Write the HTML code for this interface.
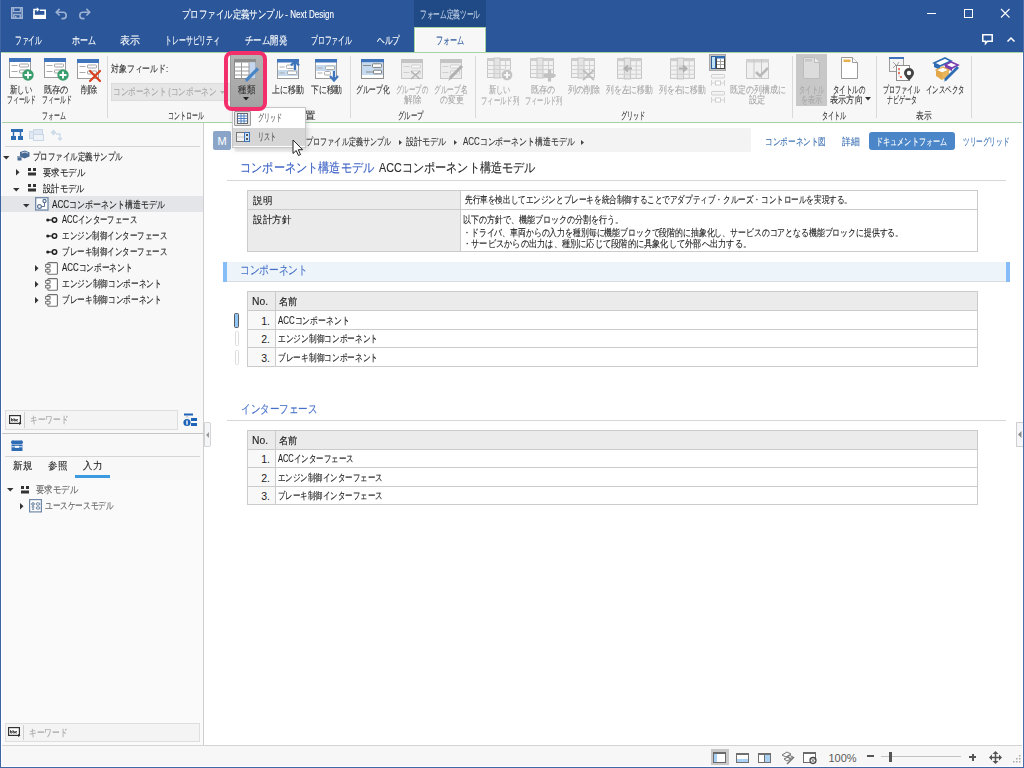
<!DOCTYPE html>
<html><head><meta charset="utf-8">
<style>
*{box-sizing:border-box;margin:0;padding:0}
html,body{width:1024px;height:768px;overflow:hidden;background:#f7f7f7;font-family:"Liberation Sans",sans-serif}
.a{position:absolute}
.t{position:absolute;white-space:nowrap;display:inline-block;transform-origin:0 50%;-webkit-text-stroke:0.12px currentColor;line-height:12px;height:12px;font-size:11px;color:#3c3c3c}
.tb{color:#fff;font-size:10.5px}
.rb{font-size:9.8px;line-height:10px;height:10px;color:#333}
.dis{color:#a8a8a8}
.gl{font-size:10.5px;line-height:10px;height:10px;color:#404040}
.sep{position:absolute;width:1px;background:#dadada}
.tr{font-size:10.2px;color:#1e1e1e}
.ct{font-size:10px;color:#1e1e1e;margin-top:0.7px}
svg{position:absolute;overflow:visible}
</style>
</head><body>
<!-- window frame -->
<div class="a" style="left:0;top:0;width:1024px;height:52px;background:#2b579a"></div>
<div class="a" style="left:414px;top:0;width:72px;height:27px;background:#1f4a85"></div>
<div class="a" style="left:414px;top:27px;width:72px;height:25px;background:#f7f7f7;border:1px solid #a6d3a6;border-bottom:none;box-shadow:inset 1px 1px 0 #fff,inset -1px 0 0 #fff"></div>
<div class="a" style="left:0;top:52px;width:1024px;height:1px;background:#a6d3a6"></div>
<!-- ribbon -->
<div class="a" style="left:1px;top:53px;width:1022px;height:69px;background:#f7f7f7"></div>
<div class="a" style="left:0;top:122px;width:1024px;height:1px;background:#a6d3a6"></div>
<!-- left panel -->
<div class="a" style="left:1px;top:123px;width:202px;height:622px;background:#f8f8f8"></div>
<div class="a" style="left:203px;top:123px;width:1px;height:622px;background:#cfcfcf"></div>
<!-- main -->
<div class="a" style="left:204px;top:123px;width:819px;height:622px;background:#fff"></div>
<!-- status bar -->
<div class="a" style="left:0;top:745px;width:1024px;height:1px;background:#d4d4d4"></div>
<div class="a" style="left:1px;top:746px;width:1022px;height:21px;background:#f7f7f7"></div>
<!-- borders -->
<div class="a" style="left:1px;top:53px;width:1px;height:714px;background:#fff"></div>
<div class="a" style="left:1022px;top:53px;width:1px;height:714px;background:#fff"></div>
<div class="a" style="left:1px;top:766px;width:1022px;height:1px;background:#fff"></div>
<div class="a" style="left:0;top:0;width:1px;height:768px;background:#3d64a3"></div>
<div class="a" style="left:1023px;top:0;width:1px;height:768px;background:#4a70ab"></div>
<div class="a" style="left:0;top:767px;width:1024px;height:1px;background:#4068a6"></div>


<!-- QAT icons -->
<svg style="left:11px;top:7px" width="12" height="12"><path d="M0.8 0.8h10.4v10.4H0.8z" fill="none" stroke="#9db1d3" stroke-width="1.6"></path><path d="M2.5 1v3.6h7V1" fill="none" stroke="#9db1d3" stroke-width="1.4"></path><path d="M2.8 11V7.5h6.4V11" fill="none" stroke="#9db1d3" stroke-width="1.4"></path><rect x="4" y="9" width="1.5" height="2" fill="#9db1d3"></rect></svg>
<svg style="left:33px;top:6px" width="13" height="13"><path d="M1 12.2V5.5M1 12.2h11.2V4.2H6.8" fill="none" stroke="#fff" stroke-width="1.6"></path><path d="M0.2 8.8h11.8v4.2H0.2z" fill="#fff"></path><path d="M1 6.8V3.6h3.5" fill="none" stroke="#fff" stroke-width="1.5"></path><path d="M3.8 1.2l2.6 2.4-2.6 2.4z" fill="#fff"></path></svg>
<svg style="left:55px;top:8px" width="13" height="11"><path d="M4.6 0.9L1.3 4.2l3.3 3.3" fill="none" stroke="#9db1d3" stroke-width="1.6"></path><path d="M1.5 4.2H8a3.2 3.2 0 0 1 0 6.4H6.5" fill="none" stroke="#9db1d3" stroke-width="1.6"></path></svg>
<svg style="left:78px;top:8px" width="13" height="11"><path d="M8.4 0.9l3.3 3.3-3.3 3.3" fill="none" stroke="#9db1d3" stroke-width="1.6"></path><path d="M11.5 4.2H5a3.2 3.2 0 0 0 0 6.4h1.5" fill="none" stroke="#9db1d3" stroke-width="1.6"></path></svg>
<!-- window controls -->
<div class="a" style="left:927px;top:13px;width:8.5px;height:1px;background:#fff"></div>
<div class="a" style="left:964px;top:9px;width:8.5px;height:8.5px;border:1px solid #fff"></div>
<svg style="left:1000.5px;top:9px" width="9" height="9"><path d="M0 0L8.5 8.5M8.5 0L0 8.5" stroke="#fff" stroke-width="1.1"></path></svg>
<svg style="left:982px;top:34px" width="11" height="11"><path d="M0.8 0.8h9.4v6.5H5.5l-2 2.2V7.3H0.8z" fill="none" stroke="#fff" stroke-width="1.5"></path></svg>
<svg style="left:1007px;top:37px" width="8" height="5"><path d="M0.5 4.5L4 1l3.5 3.5" fill="none" stroke="#fff" stroke-width="1.5"></path></svg>


<!-- ribbon content -->

<!-- form group -->
<svg style="left:9px;top:58px" width="22" height="20"><svg viewBox="0 0 22 20"><rect x="0.5" y="0.5" width="21" height="19" fill="#fff" stroke="#9c9c9c"></rect><rect x="0" y="0" width="22" height="4" fill="#3d74bb"></rect><path d="M2.5 7.5h6M2.5 13.5h6" stroke="#aaa"></path><rect x="10.5" y="6" width="9" height="3" rx="0.6" fill="none" stroke="#a5a5a5"></rect><rect x="10.5" y="12" width="9" height="3" rx="0.6" fill="none" stroke="#a5a5a5"></rect></svg></svg>
<svg style="left:22px;top:69px" width="12" height="12"><svg viewBox="0 0 12 12"><circle cx="6" cy="6" r="5.7" fill="#3a9e6c"></circle><path d="M6 2.5v7M2.5 6h7" stroke="#fff" stroke-width="1.8"></path></svg></svg>
<svg style="left:44px;top:58px" width="22" height="20"><svg viewBox="0 0 22 20"><rect x="0.5" y="0.5" width="21" height="19" fill="#fff" stroke="#9c9c9c"></rect><rect x="0" y="0" width="22" height="4" fill="#3d74bb"></rect><path d="M2.5 7.5h6M2.5 13.5h6" stroke="#aaa"></path><rect x="10.5" y="6" width="9" height="3" rx="0.6" fill="none" stroke="#a5a5a5"></rect><rect x="10.5" y="12" width="9" height="3" rx="0.6" fill="none" stroke="#a5a5a5"></rect></svg></svg>
<svg style="left:57px;top:69px" width="12" height="12"><svg viewBox="0 0 12 12"><circle cx="6" cy="6" r="5.7" fill="#3a9e6c"></circle><path d="M6 2.5v7M2.5 6h7" stroke="#fff" stroke-width="1.8"></path></svg></svg>
<svg style="left:77px;top:59px" width="22" height="20"><svg viewBox="0 0 22 20"><rect x="0.5" y="0.5" width="21" height="19" fill="#fff" stroke="#9c9c9c"></rect><rect x="0" y="0" width="22" height="4" fill="#3d74bb"></rect><path d="M2.5 7.5h6M2.5 13.5h6" stroke="#aaa"></path><rect x="10.5" y="6" width="9" height="3" rx="0.6" fill="none" stroke="#a5a5a5"></rect><rect x="10.5" y="12" width="9" height="3" rx="0.6" fill="none" stroke="#a5a5a5"></rect></svg></svg>
<svg style="left:89px;top:70px" width="12" height="12"><path d="M1 1l10 10M11 1L1 11" stroke="#d9401f" stroke-width="2.2" stroke-linecap="round"></path></svg>
<div class="sep" style="left:107px;top:56px;height:62px"></div>
<!-- control group -->
<div class="a" style="left:111px;top:83px;width:130px;height:18px;background:#e6e6e6;border:1px solid #dcdcdc"></div>
<svg style="left:220px;top:91px" width="5" height="3"><path d="M0 0h5L2.5 3z" fill="#b0b0b0"></path></svg>
<div class="sep" style="left:350px;top:56px;height:62px"></div>
<!-- kind button -->
<div class="a" style="left:230px;top:54px;width:33px;height:54px;background:linear-gradient(#b4b4b4,#a3a3a3);border-left:1px solid #9a9a9a"></div>
<svg style="left:234px;top:59px" width="26" height="24"><rect x="0.5" y="0.5" width="21" height="19" fill="#fff" stroke="#8a8a8a"></rect><rect x="0" y="0" width="22" height="3.5" fill="#8e8e8e"></rect><rect x="15" y="3.5" width="6.5" height="16" fill="#c4d7ee"></rect><path d="M0 8h15M0 12h15M0 16h15M7.5 3.5v16M15 3.5v16" stroke="#9a9a9a"></path><path d="M24 9.5L12 21.5" stroke="#4a86c6" stroke-width="3.2"></path><path d="M12.5 20.5l-1.5 2.5 2.5-1.5z" fill="#4a86c6"></path></svg>
<svg style="left:243px;top:97px" width="6" height="4"><path d="M0 0h6L3 3.5z" fill="#222"></path></svg>
<!-- move up/down -->
<svg style="left:277px;top:59px" width="24" height="20"><rect x="0.5" y="0.5" width="21" height="19" fill="#fff" stroke="#999"></rect><rect x="0" y="0" width="22" height="3.5" fill="#3d74bb"></rect><rect x="1" y="11" width="20" height="6" fill="#c6daef"></rect><path d="M2.5 8h5M2.5 14h5" stroke="#aaa"></path><rect x="9.5" y="6" width="8" height="3.5" rx="1" fill="#fff" stroke="#aaa"></rect><rect x="10.5" y="12" width="9" height="3.5" rx="1" fill="#fff" stroke="#aaa"></rect><path d="M18 11V3.5" stroke="#3d74bb" stroke-width="2.4"></path><path d="M14 6.5l4-4.5 4 4.5" fill="none" stroke="#3d74bb" stroke-width="2.2"></path></svg>
<svg style="left:315px;top:59px" width="24" height="23"><rect x="0.5" y="0.5" width="21" height="19" fill="#fff" stroke="#999"></rect><rect x="0" y="0" width="22" height="3.5" fill="#3d74bb"></rect><rect x="1" y="6" width="20" height="6" fill="#c6daef"></rect><path d="M2.5 9h5M2.5 14h5" stroke="#aaa"></path><rect x="10.5" y="7" width="9" height="3.5" rx="1" fill="#fff" stroke="#aaa"></rect><rect x="9.5" y="12.5" width="6" height="3.5" rx="1" fill="#fff" stroke="#aaa"></rect><path d="M19 12v8.5" stroke="#3d74bb" stroke-width="2.4"></path><path d="M15 17l4 4.5 4-4.5" fill="none" stroke="#3d74bb" stroke-width="2.2"></path></svg>
<!-- group group -->
<svg style="left:361px;top:59px" width="23" height="20"><rect x="0.5" y="0.5" width="22" height="19" fill="#fff" stroke="#8c8c8c"></rect><rect x="0" y="0" width="23" height="3.5" fill="#3d74bb"></rect><rect x="1" y="3.5" width="21" height="12.5" fill="#c6daef"></rect><path d="M2 6.5h8M5 13h7" stroke="#8a8a8a"></path><rect x="11.5" y="4.8" width="9" height="3.6" rx="0.8" fill="#fff" stroke="#7d7d7d"></rect><rect x="12.5" y="11.2" width="8" height="3.6" rx="0.8" fill="#fff" stroke="#7d7d7d"></rect></svg>
<svg style="left:401px;top:59px" width="22" height="20"><svg viewBox="0 0 22 20"><rect x="0.5" y="0.5" width="21" height="19" fill="#ececec" stroke="#c8c8c8"></rect><rect x="0" y="0" width="22" height="4" fill="#c4c4c4"></rect><path d="M2.5 7.5h6M2.5 13.5h6" stroke="#cfcfcf"></path><rect x="10.5" y="6" width="9" height="3" rx="0.6" fill="#f8f8f8" stroke="#cfcfcf"></rect><rect x="10.5" y="12" width="9" height="3" rx="0.6" fill="#f8f8f8" stroke="#cfcfcf"></rect></svg></svg>
<svg style="left:410px;top:70px" width="12" height="10"><path d="M1 1l9 8M10 1L1 9" stroke="#b5b5b5" stroke-width="1.6"></path></svg>
<svg style="left:440px;top:59px" width="22" height="20"><svg viewBox="0 0 22 20"><rect x="0.5" y="0.5" width="21" height="19" fill="#ececec" stroke="#c8c8c8"></rect><rect x="0" y="0" width="22" height="4" fill="#c4c4c4"></rect><path d="M2.5 7.5h6M2.5 13.5h6" stroke="#cfcfcf"></path><rect x="10.5" y="6" width="9" height="3" rx="0.6" fill="#f8f8f8" stroke="#cfcfcf"></rect><rect x="10.5" y="12" width="9" height="3" rx="0.6" fill="#f8f8f8" stroke="#cfcfcf"></rect></svg></svg>
<svg style="left:446px;top:64px" width="18" height="18"><path d="M16 2L4 14" stroke="#b0b0b0" stroke-width="3"></path><path d="M4.5 13l-2.5 4 4-2.5z" fill="#b0b0b0"></path></svg>
<div class="sep" style="left:475px;top:56px;height:62px"></div>
<!-- grid group -->
<svg style="left:487px;top:58px" width="24" height="20"><svg viewBox="0 0 24 20"><rect x="0.5" y="0.5" width="23" height="19" fill="#f2f2f2" stroke="#c6c6c6"></rect><rect x="0" y="0" width="24" height="3" fill="#cdcdcd"></rect><rect x="7" y="0" width="6" height="20" fill="#e4e4e4" stroke="#c6c6c6"></rect><path d="M0 7.5h24M0 11.5h24M0 15.5h24M18.5 0v20" stroke="#d0d0d0"></path></svg></svg>
<svg style="left:501px;top:69px" width="12" height="12"><circle cx="6" cy="6" r="5.6" fill="#c2c2c2" stroke="#f7f7f7" stroke-width="0.6"></circle><path d="M6 2.8v6.4M2.8 6h6.4" stroke="#fff" stroke-width="1.7"></path></svg>
<svg style="left:530px;top:58px" width="24" height="20"><svg viewBox="0 0 24 20"><rect x="0.5" y="0.5" width="23" height="19" fill="#f2f2f2" stroke="#c6c6c6"></rect><rect x="0" y="0" width="24" height="3" fill="#cdcdcd"></rect><rect x="7" y="0" width="6" height="20" fill="#e4e4e4" stroke="#c6c6c6"></rect><path d="M0 7.5h24M0 11.5h24M0 15.5h24M18.5 0v20" stroke="#d0d0d0"></path></svg></svg>
<svg style="left:543px;top:69px" width="13" height="13"><path d="M6.5 0.5v12M0.5 6.5h12" stroke="#c2c2c2" stroke-width="3.2"></path></svg>
<svg style="left:571px;top:58px" width="24" height="20"><svg viewBox="0 0 24 20"><rect x="0.5" y="0.5" width="23" height="19" fill="#f2f2f2" stroke="#c6c6c6"></rect><rect x="0" y="0" width="24" height="3" fill="#cdcdcd"></rect><rect x="7" y="0" width="6" height="20" fill="#e4e4e4" stroke="#c6c6c6"></rect><path d="M0 7.5h24M0 11.5h24M0 15.5h24M18.5 0v20" stroke="#d0d0d0"></path></svg></svg>
<svg style="left:582px;top:69px" width="13" height="12"><path d="M1 1l11 10M12 1L1 11" stroke="#bdbdbd" stroke-width="1.7"></path></svg>
<svg style="left:617px;top:58px" width="25" height="21"><svg width="25" height="21" viewBox="0 0 24 20"><rect x="0.5" y="0.5" width="23" height="19" fill="#f2f2f2" stroke="#c6c6c6"></rect><rect x="0" y="0" width="24" height="3" fill="#cdcdcd"></rect><rect x="7" y="0" width="6" height="20" fill="#e4e4e4" stroke="#c6c6c6"></rect><path d="M0 7.5h24M0 11.5h24M0 15.5h24M18.5 0v20" stroke="#d0d0d0"></path></svg><path d="M15 10.5H8M11 7.5l-3.5 3 3.5 3" fill="none" stroke="#b0b0b0" stroke-width="2"></path></svg>
<svg style="left:670px;top:58px" width="25" height="21"><svg width="25" height="21" viewBox="0 0 24 20"><rect x="0.5" y="0.5" width="23" height="19" fill="#f2f2f2" stroke="#c6c6c6"></rect><rect x="0" y="0" width="24" height="3" fill="#cdcdcd"></rect><rect x="7" y="0" width="6" height="20" fill="#e4e4e4" stroke="#c6c6c6"></rect><path d="M0 7.5h24M0 11.5h24M0 15.5h24M18.5 0v20" stroke="#d0d0d0"></path></svg><path d="M9 10.5h7M13 7.5l3.5 3-3.5 3" fill="none" stroke="#b0b0b0" stroke-width="2"></path></svg>
<div class="a" style="left:709px;top:54px;width:17px;height:17px;background:#c2c2c2;border:1px solid #a8a8a8"></div>
<svg style="left:711px;top:56px" width="14" height="13"><rect x="0.5" y="0.5" width="4" height="12" fill="#bfe3fb" stroke="#2e5e9a"></rect><rect x="5.5" y="0.5" width="8" height="12" fill="#fff" stroke="#444"></rect><rect x="5" y="0" width="9" height="2.5" fill="#2e6db4"></rect><path d="M6 5.5h7M6 8.5h7M9.5 3v9" stroke="#999" stroke-width="0.9"></path></svg>
<svg style="left:711px;top:74px" width="14" height="13"><rect x="0.5" y="0.5" width="13" height="3.5" rx="0.8" fill="#f4f4f4" stroke="#d0d0d0"></rect><path d="M0.5 6v6M13.5 6v6M1 9h12" stroke="#d4d4d4"></path><rect x="4.5" y="7" width="5" height="4" fill="#fff" stroke="#d0d0d0"></rect></svg>
<svg style="left:711px;top:91px" width="14" height="13"><rect x="0.5" y="0.5" width="13" height="3.5" rx="0.8" fill="#f4f4f4" stroke="#d0d0d0"></rect><path d="M0.5 6v6M13.5 6v6M1 9h12" stroke="#d4d4d4"></path><rect x="4.5" y="7" width="5" height="4" fill="#fff" stroke="#d0d0d0"></rect></svg>
<svg style="left:746px;top:59px" width="24" height="20"><rect x="0.5" y="0.5" width="22" height="19" fill="#f0f0f0" stroke="#c8c8c8"></rect><rect x="0" y="0" width="23" height="3.5" fill="#d2d2d2"></rect><path d="M8 0v20M15.5 0v20" stroke="#c8c8c8"></path><path d="M10 13l4 4 8-8" fill="none" stroke="#b8b8b8" stroke-width="2.6"></path></svg>
<div class="sep" style="left:792px;top:56px;height:62px"></div>
<!-- title group -->
<div class="a" style="left:796px;top:54px;width:31px;height:52px;background:#c8c8c8"></div>
<svg style="left:803px;top:57px" width="18" height="23"><path d="M0.5 0.5h11l5 5v16h-16z" fill="#dcdcdc" stroke="#bcbcbc"></path><path d="M11.5 0.5v5h5" fill="#f0f0f0" stroke="#bcbcbc"></path><rect x="2" y="2" width="7" height="2.5" fill="#c6c6c6"></rect></svg>
<svg style="left:841px;top:57px" width="18" height="23"><path d="M0.5 0.5h11l5 5v16h-16z" fill="#fff" stroke="#9a9a9a"></path><path d="M11.5 0.5v5h5" fill="#fff" stroke="#9a9a9a"></path><rect x="2.5" y="2.5" width="7" height="2.5" fill="#e8b04a"></rect></svg>
<svg style="left:865px;top:97px" width="6" height="4"><path d="M0 0h6L3 3.5z" fill="#333"></path></svg>
<div class="sep" style="left:876px;top:56px;height:62px"></div>
<!-- display group -->
<svg style="left:889px;top:57px" width="26" height="25"><rect x="0.5" y="0.5" width="14" height="14" fill="#f4f4f4" stroke="#9c9c9c"></rect><rect x="0" y="0" width="15" height="2" fill="#3d74bb"></rect><path d="M4 5l3 3-3 3M10 5l-2 3" fill="none" stroke="#a0a0a0"></path><rect x="7.5" y="8.5" width="13" height="15" fill="#fff" stroke="#8c8c8c"></rect><path d="M10 12v8" stroke="#ccc"></path><circle cx="10" cy="12" r="1" fill="#e8553a"></circle><circle cx="10" cy="16" r="1" fill="#e8553a"></circle><circle cx="12" cy="20" r="1" fill="#e8553a"></circle><path d="M20 11a5 5 0 0 1 5 5c0 3-5 7.5-5 7.5s-5-4.5-5-7.5a5 5 0 0 1 5-5z" fill="#444"></path><circle cx="20" cy="16" r="2.2" fill="#fff"></circle></svg>
<svg style="left:933px;top:57px" width="26" height="25"><path d="M1 6l11-5 6 3-11 5z" fill="#fff" stroke="#2e6db4" stroke-width="1.6"></path><path d="M1 6v4l6 3v-4z" fill="#2e6db4"></path><path d="M12 8l6-3 7 3-6 3z" fill="#fff" stroke="#7a3fb0" stroke-width="1.6"></path><path d="M12 8v3l7 3v-3z" fill="#7a3fb0"></path><path d="M3 13l7-3 6 3-7 3z" fill="#fff" stroke="#e4a84a" stroke-width="1.2"></path><path d="M3 13v6l6 4v-7z" fill="#e4a84a"></path><path d="M9 16l7-3v6l-7 4z" fill="#e9b55c"></path><path d="M25 10L12 23" stroke="#2e6db4" stroke-width="2.8"></path><path d="M12.5 22l-2 3 3-2z" fill="#2e6db4"></path></svg>
<div class="sep" style="left:971px;top:56px;height:62px"></div>


<!-- left panel -->
<svg style="left:11px;top:129px" width="12" height="11"><rect x="0" y="0" width="12" height="3" fill="#2e6db4"></rect><path d="M2.5 3v4M9.5 3v4" stroke="#2e6db4" stroke-width="1.4"></path><rect x="0" y="7" width="5" height="4" fill="#2e6db4"></rect><rect x="7" y="7" width="5" height="4" fill="#2e6db4"></rect></svg>
<svg style="left:29px;top:129px" width="15" height="12"><rect x="0.5" y="2.5" width="9" height="7" fill="#dfe8f2" stroke="#c9d7e7"></rect><rect x="4.5" y="0.5" width="9" height="6" fill="#dfe8f2" stroke="#c9d7e7"></rect><rect x="4.5" y="5.5" width="10" height="6" fill="#eef3f8" stroke="#c9d7e7"></rect></svg>
<svg style="left:50px;top:129px" width="12" height="12"><path d="M0.5 3.5l3-3 3 3-3 3z" fill="#cddbeb"></path><path d="M6 5h4v6M8 9l2 2 2-2" fill="none" stroke="#cddbeb" stroke-width="1.5"></path></svg>
<div class="a" style="left:5px;top:146px;width:195px;height:1px;background:#d6d6d6"></div>
<div class="a" style="left:1px;top:196px;width:202px;height:16px;background:#e3e5e8"></div>
<svg style="left:3px;top:155.5px" width="7" height="4"><path d="M0 0h6.5L3.25 3.5z" fill="#333"></path></svg>
<svg style="left:17px;top:150px" width="13" height="11"><path d="M3 2l5-1.5 4.5 2v4l-5 2-4.5-2z" fill="#466a93"></path><path d="M4.5 3l3.5-1 3 1.2" fill="none" stroke="#cfd9e6" stroke-width="1"></path><rect x="0.5" y="6" width="4" height="4.5" fill="#466a93"></rect><path d="M1 7h3" stroke="#cfd9e6" stroke-width="0.8"></path></svg>
<svg style="left:16px;top:169px" width="4" height="7"><path d="M0 0v6.5L3.5 3.25z" fill="#333"></path></svg>
<svg style="left:28px;top:168px" width="9" height="8"><rect x="0" y="0" width="3" height="3" fill="#333"></rect><rect x="5" y="0" width="3" height="3" fill="#333"></rect><rect x="0" y="4.5" width="8" height="3" fill="#333"></rect></svg>
<svg style="left:13px;top:187.5px" width="7" height="4"><path d="M0 0h6.5L3.25 3.5z" fill="#333"></path></svg>
<svg style="left:28px;top:184px" width="9" height="8"><rect x="0" y="0" width="3" height="3" fill="#333"></rect><rect x="5" y="0" width="3" height="3" fill="#333"></rect><rect x="0" y="4.5" width="8" height="3" fill="#333"></rect></svg>
<svg style="left:22.5px;top:203.5px" width="7" height="4"><path d="M0 0h6.5L3.25 3.5z" fill="#333"></path></svg>
<svg style="left:35px;top:197px" width="14" height="14"><rect x="0.7" y="0.7" width="12.3" height="12.3" fill="#fff" stroke="#7088a8" stroke-width="1.3"></rect><circle cx="4.5" cy="9.5" r="1.9" fill="none" stroke="#5a7394" stroke-width="1.2"></circle><circle cx="9.5" cy="4" r="1.6" fill="none" stroke="#5a7394" stroke-width="1.2"></circle><path d="M9.5 5.5v4h-3" fill="none" stroke="#5a7394"></path></svg>
<svg style="left:46px;top:217px" width="12" height="6"><circle cx="1.8" cy="3" r="1.6" fill="#222"></circle><path d="M3 3h3" stroke="#222" stroke-width="1.2"></path><circle cx="8.5" cy="3" r="2.2" fill="none" stroke="#222" stroke-width="1.5"></circle></svg>
<svg style="left:46px;top:233px" width="12" height="6"><circle cx="1.8" cy="3" r="1.6" fill="#222"></circle><path d="M3 3h3" stroke="#222" stroke-width="1.2"></path><circle cx="8.5" cy="3" r="2.2" fill="none" stroke="#222" stroke-width="1.5"></circle></svg>
<svg style="left:46px;top:249px" width="12" height="6"><circle cx="1.8" cy="3" r="1.6" fill="#222"></circle><path d="M3 3h3" stroke="#222" stroke-width="1.2"></path><circle cx="8.5" cy="3" r="2.2" fill="none" stroke="#222" stroke-width="1.5"></circle></svg>
<svg style="left:35px;top:265px" width="4" height="7"><path d="M0 0v6.5L3.5 3.25z" fill="#333"></path></svg>
<svg style="left:45px;top:261.5px" width="13" height="13"><rect x="2.8" y="0.6" width="9.6" height="11.6" rx="1" fill="#fff" stroke="#707070" stroke-width="1.1"></rect><rect x="0.6" y="2.4" width="4.5" height="2.8" rx="0.8" fill="#fff" stroke="#707070" stroke-width="1.1"></rect><rect x="0.6" y="7.2" width="4.5" height="2.8" rx="0.8" fill="#fff" stroke="#707070" stroke-width="1.1"></rect></svg>
<svg style="left:35px;top:281px" width="4" height="7"><path d="M0 0v6.5L3.5 3.25z" fill="#333"></path></svg>
<svg style="left:45px;top:277.5px" width="13" height="13"><rect x="2.8" y="0.6" width="9.6" height="11.6" rx="1" fill="#fff" stroke="#707070" stroke-width="1.1"></rect><rect x="0.6" y="2.4" width="4.5" height="2.8" rx="0.8" fill="#fff" stroke="#707070" stroke-width="1.1"></rect><rect x="0.6" y="7.2" width="4.5" height="2.8" rx="0.8" fill="#fff" stroke="#707070" stroke-width="1.1"></rect></svg>
<svg style="left:35px;top:297px" width="4" height="7"><path d="M0 0v6.5L3.5 3.25z" fill="#333"></path></svg>
<svg style="left:45px;top:293.5px" width="13" height="13"><rect x="2.8" y="0.6" width="9.6" height="11.6" rx="1" fill="#fff" stroke="#707070" stroke-width="1.1"></rect><rect x="0.6" y="2.4" width="4.5" height="2.8" rx="0.8" fill="#fff" stroke="#707070" stroke-width="1.1"></rect><rect x="0.6" y="7.2" width="4.5" height="2.8" rx="0.8" fill="#fff" stroke="#707070" stroke-width="1.1"></rect></svg>
<span class="t tr" style="left: 33px; top: 150.6px; --w: 89.5px; transform: scaleX(0.7458);">プロファイル定義サンプル</span>
<span class="t tr" style="left: 42.5px; top: 166.5px; --w: 42.2px; transform: scaleX(0.844);">要求モデル</span>
<span class="t tr" style="left: 42.7px; top: 182.7px; --w: 41.3px; transform: scaleX(0.826);">設計モデル</span>
<span class="t tr" style="left: 52.1px; top: 198.5px; --w: 112.6px; transform: scaleX(0.7957);">ACCコンポーネント構造モデル</span>
<span class="t tr" style="left: 61.8px; top: 214.3px; --w: 75.0px; transform: scaleX(0.7388);">ACCインターフェース</span>
<span class="t tr" style="left: 61.8px; top: 230.2px; --w: 105.0px; transform: scaleX(0.75);">エンジン制御インターフェース</span>
<span class="t tr" style="left: 61.8px; top: 246.2px; --w: 105.0px; transform: scaleX(0.75);">ブレーキ制御インターフェース</span>
<span class="t tr" style="left: 61.8px; top: 262.2px; --w: 70.6px; transform: scaleX(0.7715);">ACCコンポーネント</span>
<span class="t tr" style="left: 61.8px; top: 278.2px; --w: 99.7px; transform: scaleX(0.7669);">エンジン制御コンポーネント</span>
<span class="t tr" style="left: 61.8px; top: 294.2px; --w: 99.7px; transform: scaleX(0.7669);">ブレーキ制御コンポーネント</span>

<div class="a" style="left:5px;top:410px;width:173px;height:20px;background:#f4f4f4;border:1px solid #dedede"></div>
<div class="a" style="left:24px;top:412px;width:1px;height:16px;background:#cfcfcf"></div>
<svg style="left:9px;top:415px" width="13" height="10"><rect x="0.6" y="0.6" width="10.8" height="7.8" fill="#fff" stroke="#333" stroke-width="1.2"></rect><path d="M2.5 3v3h1.5v-1.5h-1.5M5 3v3h1.5v-1.5h-1.5M9 4.5h-1.5v1.5h1.5" fill="none" stroke="#333" stroke-width="0.8"></path><path d="M10 7l2.5 1.5-2.5 1.5z" fill="#333"></path></svg>
<svg style="left:183px;top:413px" width="15" height="14"><rect x="1" y="0.5" width="9" height="2" fill="#1f63b8"></rect><circle cx="4" cy="9.5" r="3.6" fill="#1f63b8"></circle><rect x="3.3" y="7.5" width="1.4" height="4.2" fill="#fff"></rect><rect x="8" y="5" width="6" height="3" fill="#1f63b8"></rect><rect x="8" y="10" width="6" height="3" fill="#1f63b8"></rect><path d="M3 4.5l1-1 1 1" fill="none" stroke="#888" stroke-width="0.8"></path></svg>
<div class="a" style="left:2px;top:433px;width:201px;height:1px;background:#c4c4c4"></div>
<div class="a" style="left:204px;top:422px;width:6.5px;height:25px;background:#f4f6f9;border:1px solid #d4d4d4;border-radius:0 2px 2px 0"></div>
<svg style="left:205.5px;top:431.5px" width="4" height="7"><path d="M3 0v6L0 3z" fill="#9a9a9a"></path></svg>
<svg style="left:11px;top:440px" width="12" height="11"><path d="M1 4a2 2 0 0 1 2-3.5h6a2 2 0 0 1 2 3.5z" fill="#2e6db4"></path><rect x="0.5" y="4.5" width="11" height="6.5" fill="#2e6db4"></rect><path d="M0.5 6.8h11" stroke="#fff" stroke-width="0.9"></path><rect x="4" y="5.8" width="4" height="2" fill="#fff"></rect></svg>
<div class="a" style="left:5px;top:456px;width:195px;height:1px;background:#d6d6d6"></div>
<div class="a" style="left:75px;top:475px;width:35px;height:2.5px;background:#3c9be0"></div>
<div class="a" style="left:2px;top:480px;width:201px;height:265px;background:#fafafa"></div>
<svg style="left:7px;top:488px" width="7" height="4"><path d="M0 0h6.5L3.25 3.5z" fill="#333"></path></svg>
<svg style="left:21px;top:486px" width="9" height="8"><rect x="0" y="0" width="3" height="3" fill="#333"></rect><rect x="5" y="0" width="3" height="3" fill="#333"></rect><rect x="0" y="4.5" width="8" height="3" fill="#333"></rect></svg>
<svg style="left:20px;top:503px" width="4" height="7"><path d="M0 0v6.5L3.5 3.25z" fill="#333"></path></svg>
<svg style="left:29px;top:499px" width="13" height="14"><rect x="0.6" y="0.6" width="11.8" height="12.3" fill="#fff" stroke="#7088a8" stroke-width="1.2"></rect><circle cx="4" cy="5" r="1.3" fill="none" stroke="#5a7394"></circle><path d="M4 6.5v3M2.5 8h3M3 11l1-1.5 1 1.5" fill="none" stroke="#5a7394" stroke-width="0.8"></path><ellipse cx="9" cy="5" rx="2" ry="1.2" fill="none" stroke="#5a7394" stroke-width="0.9"></ellipse><ellipse cx="9" cy="9" rx="2" ry="1.2" fill="none" stroke="#5a7394" stroke-width="0.9"></ellipse></svg>
<div class="a" style="left:5px;top:723px;width:195px;height:19px;background:#f4f4f4;border:1px solid #dedede"></div>
<div class="a" style="left:23px;top:725px;width:1px;height:15px;background:#cfcfcf"></div>
<svg style="left:8px;top:727px" width="13" height="10"><rect x="0.6" y="0.6" width="10.8" height="7.8" fill="#fff" stroke="#333" stroke-width="1.2"></rect><path d="M2.5 3v3h1.5v-1.5h-1.5M5 3v3h1.5v-1.5h-1.5M9 4.5h-1.5v1.5h1.5" fill="none" stroke="#333" stroke-width="0.8"></path><path d="M10 7l2.5 1.5-2.5 1.5z" fill="#333"></path></svg>
<span class="t tr" style="left: 29.5px; top: 414px; --w: 38.5px; color: rgb(166, 166, 166); transform: scaleX(0.77);">キーワード</span>
<span class="t tr" style="left: 13px; top: 460px; --w: 19.0px; transform: scaleX(0.95);">新規</span>
<span class="t tr" style="left: 48px; top: 460px; --w: 19.0px; transform: scaleX(0.95);">参照</span>
<span class="t tr" style="left: 83px; top: 460px; --w: 19.0px; transform: scaleX(0.95);">入力</span>
<span class="t tr" style="left: 36px; top: 484.3px; --w: 42.0px; color: rgb(102, 102, 102); transform: scaleX(0.84);">要求モデル</span>
<span class="t tr" style="left: 45px; top: 500.3px; --w: 68.5px; color: rgb(102, 102, 102); transform: scaleX(0.7611);">ユースケースモデル</span>
<span class="t tr" style="left: 28.5px; top: 726.5px; --w: 38.5px; color: rgb(166, 166, 166); transform: scaleX(0.77);">キーワード</span>


<!-- main content -->
<div class="a" style="left:1016px;top:422px;width:7px;height:25px;background:#f4f6f9;border:1px solid #cfcfcf;border-right:none"></div>
<svg style="left:1018px;top:431px" width="4" height="7"><path d="M3.5 0v7L0 3.5z" fill="#8a8a8a"></path></svg>
<div class="a" style="left:235px;top:128px;width:516px;height:24px;background:#f3f3f3;border-radius:2px"></div>
<div class="a" style="left:213px;top:131px;width:18px;height:18.5px;background:#8aa5c8;border-radius:2px"></div>
<span class="a" style="left:213px;top:134.5px;width:18px;text-align:center;color:#fff;font-size:11px;line-height:12px">M</span>
<svg style="left:399px;top:139.5px" width="4" height="6"><path d="M0 0v5L3 2.5z" fill="#444"></path></svg>
<svg style="left:454px;top:139.5px" width="4" height="6"><path d="M0 0v5L3 2.5z" fill="#444"></path></svg>
<svg style="left:581px;top:139.5px" width="4" height="6"><path d="M0 0v5L3 2.5z" fill="#444"></path></svg>
<div class="a" style="left:869px;top:132px;width:86px;height:18px;background:#4a86c8;border-radius:3px"></div>
<div class="a" style="left:227px;top:180px;width:779px;height:1px;background:#d8d8d8"></div>
<!-- desc table -->
<div class="a" style="left:247px;top:190px;width:731px;height:62px;background:#fff;border:1px solid #cbcbcb"></div>
<div class="a" style="left:248px;top:191px;width:212px;height:60px;background:#ebebeb"></div>
<div class="a" style="left:460px;top:191px;width:1px;height:60px;background:#cbcbcb"></div>
<div class="a" style="left:248px;top:209px;width:729px;height:1px;background:#cbcbcb"></div>
<!-- component section -->
<div class="a" style="left:227px;top:262px;width:779px;height:20px;background:#eef5fa;border-bottom:1px solid #d9dde1"></div>
<div class="a" style="left:223px;top:262px;width:4px;height:19.5px;background:#86bcf8"></div>
<div class="a" style="left:1006px;top:262px;width:4px;height:19.5px;background:#86bcf8"></div>
<div class="a" style="left:227px;top:420px;width:779px;height:1px;background:#d8d8d8"></div>
<div class="a" style="left:247px;top:291px;width:731px;height:76px;background:#fff;border:1px solid #cbcbcb"></div>
<div class="a" style="left:248px;top:292px;width:729px;height:18px;background:#ebebeb"></div>
<div class="a" style="left:248px;top:311px;width:27px;height:55px;background:#f8f8f8"></div>
<div class="a" style="left:275px;top:292px;width:1px;height:74px;background:#cbcbcb"></div>
<div class="a" style="left:248px;top:310px;width:729px;height:1px;background:#cbcbcb"></div>
<div class="a" style="left:248px;top:329px;width:729px;height:1px;background:#cbcbcb"></div>
<div class="a" style="left:248px;top:347px;width:729px;height:1px;background:#cbcbcb"></div>
<div class="a" style="left:247px;top:430px;width:731px;height:75px;background:#fff;border:1px solid #cbcbcb"></div>
<div class="a" style="left:248px;top:431px;width:729px;height:18px;background:#ebebeb"></div>
<div class="a" style="left:248px;top:450px;width:27px;height:54px;background:#f8f8f8"></div>
<div class="a" style="left:275px;top:431px;width:1px;height:73px;background:#cbcbcb"></div>
<div class="a" style="left:248px;top:449px;width:729px;height:1px;background:#cbcbcb"></div>
<div class="a" style="left:248px;top:467px;width:729px;height:1px;background:#cbcbcb"></div>
<div class="a" style="left:248px;top:486px;width:729px;height:1px;background:#cbcbcb"></div>
<div class="a" style="left:234px;top:313px;width:4.5px;height:15px;background:#90c6f8;border:1px solid #5a5a5a;border-radius:1.5px"></div>
<div class="a" style="left:234.5px;top:331px;width:4.5px;height:15px;border:1px solid #dcdcdc;background:#fff;border-radius:1.5px"></div>
<div class="a" style="left:234.5px;top:349.5px;width:4.5px;height:15px;border:1px solid #dcdcdc;background:#fff;border-radius:1.5px"></div>
<span class="t ct" style="left: 306.4px; top: 135px; --w: 85.2px; color: rgb(51, 51, 51); transform: scaleX(0.71);">プロファイル定義サンプル</span>
<span class="t ct" style="left: 406.4px; top: 135px; --w: 40.6px; color: rgb(51, 51, 51); transform: scaleX(0.812);">設計モデル</span>
<span class="t ct" style="left: 462.5px; top: 135px; --w: 111.5px; color: rgb(51, 51, 51); transform: scaleX(0.7901);">ACCコンポーネント構造モデル</span>
<span class="t ct" style="left: 764.7px; top: 135.6px; --w: 61.0px; color: rgb(62, 114, 180); transform: scaleX(0.7625);">コンポーネント図</span>
<span class="t ct" style="left: 842.3px; top: 135.6px; --w: 17.7px; color: rgb(62, 114, 180); transform: scaleX(0.885);">詳細</span>
<span class="t ct" style="left: 876px; top: 135.3px; --w: 71.0px; color: rgb(255, 255, 255); transform: scaleX(0.71);">ドキュメントフォーム</span>
<span class="t ct" style="left: 963.3px; top: 135.6px; --w: 46.3px; color: rgb(62, 114, 180); transform: scaleX(0.6614);">ツリーグリッド</span>
<span class="t ct" style="left: 240px; top: 161.3px; --w: 134.0px; color: rgb(61, 98, 196); font-size: 12.5px; transform: scaleX(0.859);">コンポーネント構造モデル</span>
<span class="t ct" style="left: 379px; top: 161.3px; --w: 156.5px; color: rgb(42, 42, 42); font-size: 12.5px; transform: scaleX(0.858);">ACCコンポーネント構造モデル</span>
<span class="t ct" style="left: 252.5px; top: 194.2px; --w: 19.0px; transform: scaleX(0.95);">説明</span>
<span class="t ct" style="left: 252.5px; top: 213.8px; --w: 38.0px; transform: scaleX(0.95);">設計方針</span>
<span class="t ct" style="left: 464.6px; top: 193.4px; --w: 387.0px; transform: scaleX(0.7588);">先行車を検出してエンジンとブレーキを統合制御することでアダプティブ・クルーズ・コントロールを実現する。</span>
<span class="t ct" style="left: 462.6px; top: 213.8px; --w: 160.0px; transform: scaleX(0.8);">以下の方針で、機能ブロックの分割を行う。</span>
<span class="t ct" style="left: 462.6px; top: 225.9px; --w: 440.1px; transform: scaleX(0.7859);">・ドライバ、車両からの入力を種別毎に機能ブロックで段階的に抽象化し、サービスのコアとなる機能ブロックに提供する。</span>
<span class="t ct" style="left: 462.6px; top: 237.5px; --w: 288.0px; transform: scaleX(0.8229);">・サービスからの出力は、種別に応じて段階的に具象化して外部へ出力する。</span>
<span class="t ct" style="left: 239.8px; top: 263.7px; --w: 67.7px; color: rgb(70, 112, 200); font-size: 12px; transform: scaleX(0.806);">コンポーネント</span>
<span class="t ct" style="left: 240.5px; top: 402.3px; --w: 76.2px; color: rgb(70, 112, 200); font-size: 12px; transform: scaleX(0.7938);">インターフェース</span>
<span class="t ct" style="left: 252px; top: 295.8px; --w: 16.0px; transform: scaleX(1.0281);">No.</span>
<span class="t ct" style="left: 279.3px; top: 295.8px; --w: 18.7px; transform: scaleX(0.935);">名前</span>
<span class="t ct" style="left: 252px; top: 434.8px; --w: 16.0px; transform: scaleX(1.0281);">No.</span>
<span class="t ct" style="left: 279.3px; top: 434.8px; --w: 18.7px; transform: scaleX(0.935);">名前</span>
<span class="a ct" style="left:250px;top:314px;width:20px;text-align:right;font-size:10.5px;line-height:12px;color:#222">1.</span>
<span class="t ct" style="left: 278.3px; top: 314px; --w: 71.4px; transform: scaleX(0.7835);">ACCコンポーネント</span>
<span class="a ct" style="left:250px;top:332.5px;width:20px;text-align:right;font-size:10.5px;line-height:12px;color:#222">2.</span>
<span class="t ct" style="left: 278.3px; top: 332.5px; --w: 100.1px; transform: scaleX(0.77);">エンジン制御コンポーネント</span>
<span class="a ct" style="left:250px;top:351px;width:20px;text-align:right;font-size:10.5px;line-height:12px;color:#222">3.</span>
<span class="t ct" style="left: 278.3px; top: 351px; --w: 100.1px; transform: scaleX(0.77);">ブレーキ制御コンポーネント</span>
<span class="a ct" style="left:250px;top:452.6px;width:20px;text-align:right;font-size:10.5px;line-height:12px;color:#222">1.</span>
<span class="t ct" style="left: 278.3px; top: 452.6px; --w: 75.5px; transform: scaleX(0.7466);">ACCインターフェース</span>
<span class="a ct" style="left:250px;top:471.2px;width:20px;text-align:right;font-size:10.5px;line-height:12px;color:#222">2.</span>
<span class="t ct" style="left: 278.3px; top: 471.2px; --w: 104.7px; transform: scaleX(0.7479);">エンジン制御インターフェース</span>
<span class="a ct" style="left:250px;top:489.6px;width:20px;text-align:right;font-size:10.5px;line-height:12px;color:#222">3.</span>
<span class="t ct" style="left: 278.3px; top: 489.6px; --w: 104.7px; transform: scaleX(0.7479);">ブレーキ制御インターフェース</span>

<div class="a" style="left:711px;top:749px;width:18px;height:16px;background:#c8c8c8"></div>
<svg style="left:713px;top:752px" width="13" height="11"><rect x="0.5" y="0.5" width="12" height="10" fill="#fff" stroke="#6a6a6a"></rect><rect x="0" y="0" width="13" height="2" fill="#6a6a6a"></rect><rect x="1" y="2" width="3" height="8" fill="#a9d1f5"></rect></svg>
<svg style="left:736px;top:753px" width="13" height="10"><rect x="0.5" y="0.5" width="12" height="9" fill="#fff" stroke="#707070"></rect><rect x="0" y="0" width="13" height="2" fill="#707070"></rect><rect x="1" y="6" width="11" height="3" fill="#a9d1f5"></rect></svg>
<svg style="left:758px;top:753px" width="13" height="10"><rect x="0.5" y="0.5" width="12" height="9" fill="#fff" stroke="#707070"></rect><rect x="0" y="0" width="13" height="2" fill="#707070"></rect><rect x="7" y="2" width="5" height="7" fill="#a9d1f5"></rect><path d="M6.5 2v8" stroke="#707070"></path></svg>
<svg style="left:781px;top:751px" width="14" height="14"><path d="M1 4l5-3 4 2-5 3z M6 6l3-1.5 3 1.5-3 1.5z M3 8l4-2 3 2-4 2z" fill="none" stroke="#777" stroke-width="1"></path><path d="M13 6L6 13" stroke="#777" stroke-width="1.5"></path></svg>
<svg style="left:803px;top:752px" width="14" height="12"><rect x="0.5" y="0.5" width="12" height="10" fill="#fff" stroke="#6a6a6a"></rect><rect x="0" y="0" width="13" height="2" fill="#6a6a6a"></rect><circle cx="10" cy="8.5" r="3" fill="#fff" stroke="#444" stroke-width="1.3"></circle><path d="M8.5 7l3 3M11.5 7l-3 3" stroke="#444" stroke-width="0.8"></path></svg>
<span class="a" style="left:828.5px;top:751.5px;font-size:11px;line-height:13px;color:#5a5a5a">100%</span>
<div class="a" style="left:867px;top:755px;width:7px;height:2px;background:#555"></div>
<div class="a" style="left:881px;top:756px;width:80px;height:1px;background:#c2c2c2"></div>
<div class="a" style="left:889px;top:752px;width:3px;height:10px;background:#555"></div>
<div class="a" style="left:969px;top:756px;width:7px;height:2px;background:#555"></div>
<div class="a" style="left:971.5px;top:753.5px;width:2px;height:7px;background:#555"></div>
<svg style="left:989px;top:751px" width="13" height="13"><path d="M6.5 0l3 3h-6zM6.5 13l3-3h-6zM0 6.5l3-3v6zM13 6.5l-3-3v6z" fill="#555"></path><path d="M3 6.5h7M6.5 3v7" stroke="#555" stroke-width="1.5"></path></svg>
<svg style="left:1012px;top:755px" width="10" height="9"><g fill="#aaa"><rect x="7" y="0" width="1.5" height="1.5"></rect><rect x="4" y="3" width="1.5" height="1.5"></rect><rect x="7" y="3" width="1.5" height="1.5"></rect><rect x="1" y="6" width="1.5" height="1.5"></rect><rect x="4" y="6" width="1.5" height="1.5"></rect><rect x="7" y="6" width="1.5" height="1.5"></rect></g></svg>


<!-- title texts -->
<span class="t tb" style="left: 182px; top: 7.5px; --w: 152px; transform: scaleX(0.7656);">プロファイル定義サンプル - Next Design</span>
<span class="t tb" style="left: 420px; top: 7.5px; --w: 60px; color: rgb(197, 211, 232); font-size: 10.5px; transform: scaleX(0.6061);">フォーム定義ツール</span>
<span class="t tb" style="left: 15px; top: 33.8px; --w: 27px; transform: scaleX(0.6136);">ファイル</span>
<span class="t tb" style="left: 72px; top: 33.8px; --w: 24px; transform: scaleX(0.7273);">ホーム</span>
<span class="t tb" style="left: 120px; top: 33.8px; --w: 20px; transform: scaleX(0.9091);">表示</span>
<span class="t tb" style="left: 165px; top: 33.8px; --w: 55px; transform: scaleX(0.625);">トレーサビリティ</span>
<span class="t tb" style="left: 245px; top: 33.8px; --w: 42px; transform: scaleX(0.7636);">チーム開発</span>
<span class="t tb" style="left: 311px; top: 33.8px; --w: 41px; transform: scaleX(0.6212);">プロファイル</span>
<span class="t tb" style="left: 377px; top: 33.8px; --w: 23px; transform: scaleX(0.697);">ヘルプ</span>
<span class="t tb" style="left: 435.5px; top: 33.8px; --w: 28.5px; color: rgb(43, 87, 154); transform: scaleX(0.6477);">フォーム</span>

<!-- ribbon texts -->
<span class="t rb" style="left: 10px; top: 84.8px; --w: 22.0px; transform: scaleX(0.7333);">新しい</span>
<span class="t rb" style="left: 6.5px; top: 94.9px; --w: 29.1px; transform: scaleX(0.582);">フィールド</span>
<span class="t rb" style="left: 44px; top: 84.8px; --w: 24.7px; transform: scaleX(0.8233);">既存の</span>
<span class="t rb" style="left: 41.9px; top: 94.9px; --w: 29.5px; transform: scaleX(0.59);">フィールド</span>
<span class="t rb" style="left: 80.6px; top: 84.8px; --w: 16.6px; transform: scaleX(0.83);">削除</span>
<span class="t rb" style="left: 41.9px; top: 111px; --w: 23.8px; transform: scaleX(0.595);">フォーム</span>
<span class="t rb" style="left: 111.4px; top: 64px; --w: 57.1px; transform: scaleX(0.785);">対象フィールド:</span>
<span class="t rb dis" style="left: 113.3px; top: 86.6px; --w: 103.5px; transform: scaleX(0.7611);">コンポーネント (コンポーネン</span>
<span class="t rb" style="left: 167.9px; top: 111px; --w: 35.5px; transform: scaleX(0.5917);">コントロール</span>
<span class="t rb" style="left: 238px; top: 84.8px; --w: 17.0px; transform: scaleX(0.85);">種類</span>
<span class="t rb" style="left: 272px; top: 85px; --w: 31.7px; transform: scaleX(0.7925);">上に移動</span>
<span class="t rb" style="left: 310.9px; top: 84.8px; --w: 31.3px; transform: scaleX(0.7825);">下に移動</span>
<span class="t rb" style="left: 294px; top: 111px; --w: 21.0px; transform: scaleX(1.05);">配置</span>
<span class="t rb" style="left: 355.9px; top: 84.8px; --w: 33.7px; transform: scaleX(0.674);">グループ化</span>
<span class="t rb dis" style="left: 395.8px; top: 84.8px; --w: 32.2px; transform: scaleX(0.644);">グループの</span>
<span class="t rb dis" style="left: 403.7px; top: 95.1px; --w: 17.3px; transform: scaleX(0.865);">解除</span>
<span class="t rb dis" style="left: 434.4px; top: 84.8px; --w: 33.4px; transform: scaleX(0.668);">グループ名</span>
<span class="t rb dis" style="left: 439.7px; top: 95.1px; --w: 23.7px; transform: scaleX(0.79);">の変更</span>
<span class="t rb" style="left: 398.4px; top: 111px; --w: 25.5px; transform: scaleX(0.6375);">グループ</span>
<span class="t rb dis" style="left: 489.1px; top: 85.2px; --w: 21.6px; transform: scaleX(0.72);">新しい</span>
<span class="t rb dis" style="left: 480.8px; top: 95.5px; --w: 38.2px; transform: scaleX(0.6367);">フィールド列</span>
<span class="t rb dis" style="left: 530.6px; top: 85.2px; --w: 24.1px; transform: scaleX(0.8033);">既存の</span>
<span class="t rb dis" style="left: 524.8px; top: 95.5px; --w: 37.4px; transform: scaleX(0.6233);">フィールド列</span>
<span class="t rb dis" style="left: 568px; top: 85.2px; --w: 32.4px; transform: scaleX(0.81);">列の削除</span>
<span class="t rb dis" style="left: 606px; top: 85px; --w: 46.7px; transform: scaleX(0.7783);">列を左に移動</span>
<span class="t rb dis" style="left: 658.6px; top: 85px; --w: 46.9px; transform: scaleX(0.7817);">列を右に移動</span>
<span class="t rb dis" style="left: 729.9px; top: 85px; --w: 55.6px; transform: scaleX(0.7943);">既定の列構成に</span>
<span class="t rb dis" style="left: 749.4px; top: 95.1px; --w: 16.6px; transform: scaleX(0.83);">設定</span>
<span class="t rb" style="left: 620.5px; top: 111px; --w: 24.5px; transform: scaleX(0.6125);">グリッド</span>
<span class="t rb dis" style="left: 799px; top: 85.3px; --w: 25.0px; transform: scaleX(0.625);">タイトル</span>
<span class="t rb dis" style="left: 801px; top: 94.9px; --w: 21.0px; transform: scaleX(0.7);">を表示</span>
<span class="t rb" style="left: 833.4px; top: 85.3px; --w: 32.4px; transform: scaleX(0.648);">タイトルの</span>
<span class="t rb" style="left: 829.9px; top: 94.9px; --w: 32.8px; transform: scaleX(0.82);">表示方向</span>
<span class="t rb" style="left: 821.9px; top: 111px; --w: 24.4px; transform: scaleX(0.61);">タイトル</span>
<span class="t rb" style="left: 882.8px; top: 85px; --w: 36.6px; transform: scaleX(0.61);">プロファイル</span>
<span class="t rb" style="left: 886.6px; top: 94.9px; --w: 29.4px; transform: scaleX(0.588);">ナビゲータ</span>
<span class="t rb" style="left: 926.4px; top: 85px; --w: 38.4px; transform: scaleX(0.64);">インスペクタ</span>
<span class="t rb" style="left: 915.9px; top: 111px; --w: 15.5px; transform: scaleX(0.775);">表示</span>
<!-- dropdown -->
<div class="a" style="left:233px;top:109px;width:75px;height:41px;background:rgba(0,0,0,0.12);filter:blur(2px)"></div>
<div class="a" style="left:232px;top:106.5px;width:74px;height:41px;background:#fff;border:1px solid #c6c6c6"></div>
<div class="a" style="left:233px;top:127.5px;width:72px;height:18.5px;background:#d6d6d6"></div>
<div class="a" style="left:234px;top:111px;width:17px;height:15px;background:#e4e4e4;border:1px solid #9a9a9a;border-radius:1px"></div>
<svg style="left:237px;top:113px" width="11" height="11"><rect x="0.5" y="0.5" width="10" height="10" fill="#fff" stroke="#666"></rect><path d="M0.5 3h10M0.5 5.5h10M0.5 8h10M4 0.5v10M7 0.5v10" stroke="#3d74bb" stroke-width="0.9"></path></svg>
<svg style="left:236px;top:132px" width="14" height="10"><rect x="0.5" y="0.5" width="8" height="9" fill="#f0f0f0" stroke="#777"></rect><path d="M1 5h7" stroke="#c8c8c8"></path><rect x="8.5" y="0.5" width="5" height="9" fill="#cfe3f7" stroke="#3d74bb"></rect><rect x="10" y="2" width="2" height="2" fill="#555"></rect><rect x="10" y="6" width="2" height="2" fill="#555"></rect></svg>
<span class="t ct" style="left: 258px; top: 111.5px; --w: 24.0px; color: rgb(102, 102, 102); transform: scaleX(0.6);">グリッド</span>
<span class="t ct" style="left: 258px; top: 130.8px; --w: 18.0px; color: rgb(85, 85, 85); transform: scaleX(0.6);">リスト</span>
<svg style="left:292px;top:139px" width="12" height="18"><path d="M1 1v13.5l3.2-3 2.3 5 2-0.9-2.2-4.9h4.3z" fill="#fff" stroke="#222" stroke-width="1" stroke-linejoin="round"></path></svg>
<div class="a" style="left:224px;top:51px;width:43px;height:60px;border:4.5px solid #f22f6b;border-radius:8px"></div>
<script id="fitscript">
document.querySelectorAll('.t').forEach(el=>{const w=getComputedStyle(el).getPropertyValue('--w').trim();if(!w)return;el.style.transform='none';const n=el.getBoundingClientRect().width;if(n>0)el.style.transform='scaleX('+(parseFloat(w)/n).toFixed(4)+')';});
</script>

</body></html>
